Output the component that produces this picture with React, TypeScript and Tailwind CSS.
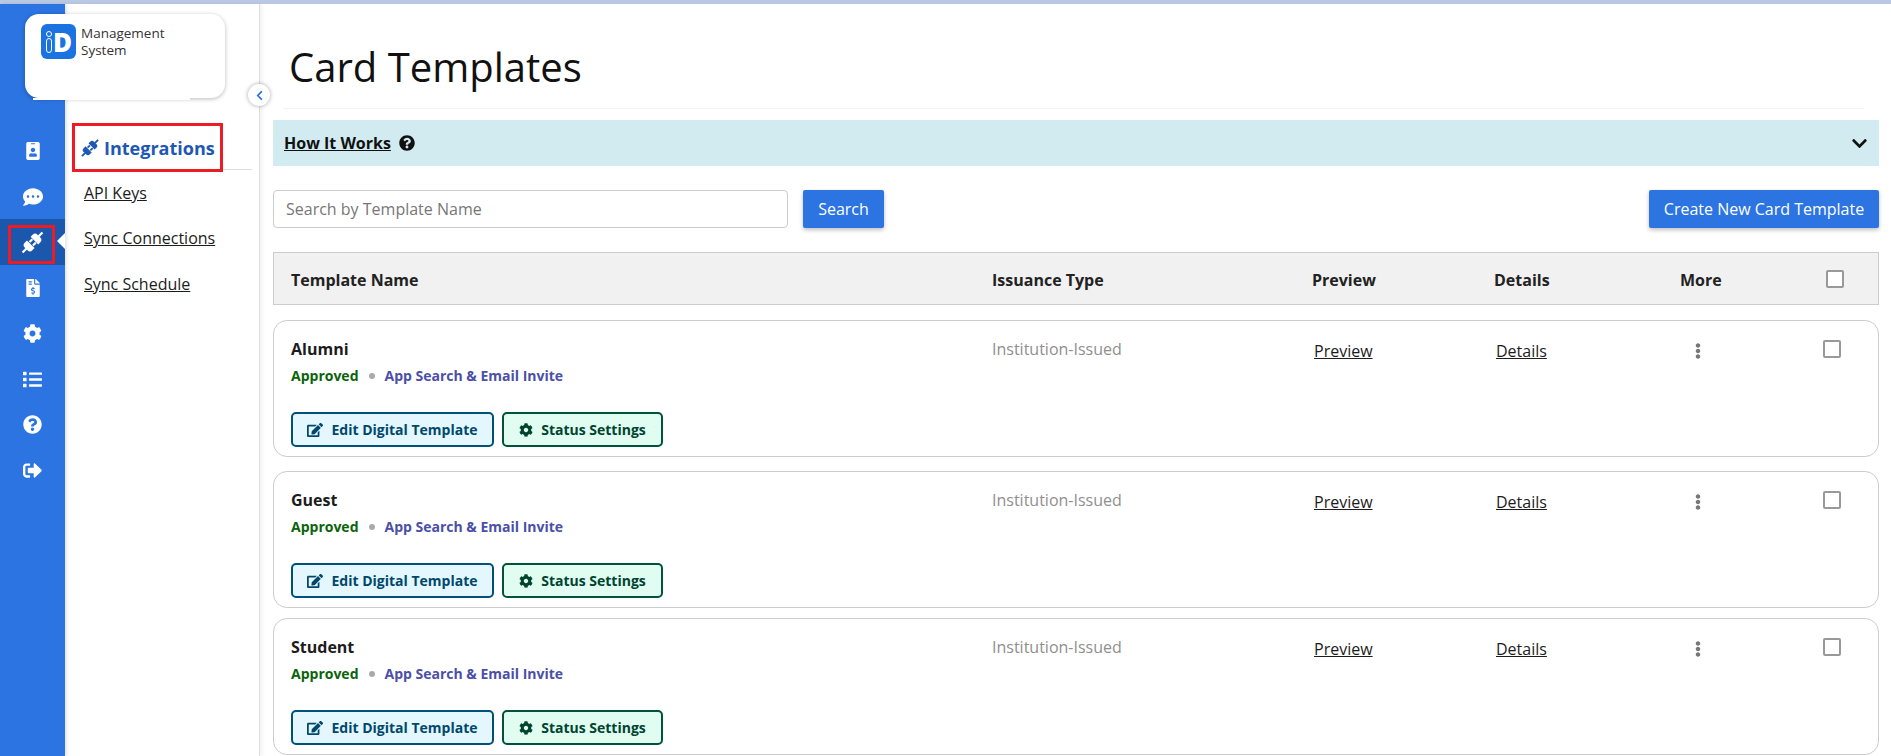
import { ReactNode } from "react";
import {
  FaChevronDown,
  FaChevronLeft,
  FaCog,
  FaCommentDots,
  FaEdit,
  FaEllipsisV,
  FaFileInvoiceDollar,
  FaIdBadge,
  FaList,
  FaQuestionCircle,
  FaSignOutAlt,
} from "react-icons/fa";

// two plugs joined on a diagonal, no package has this one without sparks
const PlugIcon = ({ size }: { size: number }) => (
  <svg width={size} height={size} viewBox="0 0 24 24" fill="currentColor">
    <g transform="rotate(45 12 12)">
      <rect x="11" y="-0.5" width="2" height="5" />
      <path d="M7.2 9.6V7a3 3 0 0 1 3-3h3.6a3 3 0 0 1 3 3v2.6z" />
      <rect x="8.9" y="10" width="1.9" height="3.6" />
      <rect x="13.2" y="10" width="1.9" height="3.6" />
      <path d="M7.2 14.2h9.6V17a3 3 0 0 1-3 3h-3.6a3 3 0 0 1-3-3z" />
      <rect x="11" y="19.5" width="2" height="5" />
    </g>
  </svg>
);

const railItems: { icon: ReactNode; active?: boolean }[] = [
  { icon: <FaIdBadge size={18} /> },
  { icon: <FaCommentDots size={20} /> },
  { icon: <PlugIcon size={27} />, active: true },
  { icon: <FaFileInvoiceDollar size={18} /> },
  { icon: <FaCog size={19} /> },
  { icon: <FaList size={19} /> },
  { icon: <FaQuestionCircle size={19} /> },
  { icon: <FaSignOutAlt size={19} /> },
];

const columns = "grid grid-cols-[701px_320px_182px_186px_146px_1fr] pl-[17px]";

const Checkbox = () => <span className="block w-[18px] h-[18px] rounded-[2px] border-2 border-[#999999] bg-white" />;

const TemplateRow = ({ name, className }: { name: string; className: string }) => (
  <div className={`${columns} h-[137px] rounded-[14px] border border-[#cccccc] pt-[17px] ${className}`}>
    <div>
      <p className="text-[16px] leading-[22px] font-bold text-[#1c1c1c]">{name}</p>
      <div className="mt-[6px] flex items-center text-[14px] leading-[20px] font-bold">
        <span className="text-[#0b630b]">Approved</span>
        <span className="mx-[10px] w-[6px] h-[6px] rounded-full bg-[#aaaaaa]" />
        <span className="text-[#4a4fa8]">App Search &amp; Email Invite</span>
      </div>
      <div className="mt-[26px] flex gap-[8px]">
        <button className="h-[35px] w-[203px] flex items-center justify-center gap-[8px] rounded-[5px] border-2 border-[#00507a] bg-[#e4f6fe] text-[14px] font-bold text-[#00486b]">
          <FaEdit size={16} />
          Edit Digital Template
        </button>
        <button className="h-[35px] w-[161px] flex items-center justify-center gap-[8px] rounded-[5px] border-2 border-[#00533b] bg-[#e1fcf1] text-[14px] font-bold text-[#00442f]">
          <FaCog size={14} />
          Status Settings
        </button>
      </div>
    </div>
    <p className="text-[16px] leading-[22px] text-[#8f8f8f]">Institution-Issued</p>
    <a className="pl-[2px] pt-[1px] text-[16px] leading-[24px] underline text-[#1c1c1c]">Preview</a>
    <a className="pl-[2px] pt-[1px] text-[16px] leading-[24px] underline text-[#1c1c1c]">Details</a>
    <span className="pl-[10px] pt-[5px] text-[#777777]">
      <FaEllipsisV size={16} />
    </span>
    <span className="-ml-[3px] pt-[2px]">
      <Checkbox />
    </span>
  </div>
);

export default function App() {
  return (
    <div className="relative w-[1891px] h-[756px] overflow-hidden bg-white font-['Open_Sans',sans-serif]">
      <div className="h-[4px] bg-[#b9c9e3]" />
      <div className="flex h-[752px]">
        {/* icon rail */}
        <aside className="w-[65px] shrink-0 bg-[#2b74e2] pt-[124px] text-white shadow-[2px_0_3px_rgba(0,0,0,0.1)]">
          {railItems.map((item, i) => (
            <div
              key={i}
              className={`relative h-[45.7px] flex items-center justify-center ${item.active ? "bg-[#1c57ae]" : ""}`}
            >
              {item.icon}
              {item.active && (
                <span className="absolute right-0 top-[14px] border-y-[8px] border-r-[8px] border-y-transparent border-r-white" />
              )}
            </div>
          ))}
        </aside>

        {/* section nav */}
        <nav className="w-[195px] shrink-0 border-r border-[#dddddd] pt-[119px] pl-[7px] pr-[7px] shadow-[2px_0_4px_rgba(0,0,0,0.06)]">
          <div className="h-[47px] flex items-center gap-[3px] pl-[7px] pt-[4px] border-b border-[#dddddd] text-[#1e58b4]">
            <PlugIcon size={22} />
            <span className="text-[18px] font-bold">Integrations</span>
          </div>
          <ul className="pl-[12px] text-[16px] text-[#1c1c1c]">
            <li className="h-[45.5px] flex items-center">
              <a className="underline">API Keys</a>
            </li>
            <li className="h-[45.5px] flex items-center">
              <a className="underline">Sync Connections</a>
            </li>
            <li className="h-[45.5px] flex items-center">
              <a className="underline">Sync Schedule</a>
            </li>
          </ul>
        </nav>

        {/* main content */}
        <main className="flex-1 pl-[13px] pr-[12px]">
          <div className="ml-[10px] mr-[15px] h-[105px] border-b border-[#f3f3f3] pl-[6px] pt-[31px]">
            <h1 className="text-[40px] leading-[64px] text-[#111111]">Card Templates</h1>
          </div>
          <div className="mt-[11px] h-[46px] flex items-center justify-between bg-[#d2ebf0] pl-[11px] pr-[11px]">
            <div className="flex items-center gap-[8px] text-[#111111]">
              <span className="text-[16px] font-bold underline">How It Works</span>
              <FaQuestionCircle size={16} />
            </div>
            <FaChevronDown size={17} className="text-[#111111]" />
          </div>

          <div className="mt-[24px] flex items-center">
            <div className="w-[515px] h-[38px] flex items-center rounded-[4px] border border-[#cccccc] pl-[12px] text-[16px] text-[#777777]">
              Search by Template Name
            </div>
            <button className="ml-[15px] w-[81px] h-[38px] rounded-[2px] bg-[#2b74e2] text-[16px] text-white shadow-[0_2px_4px_rgba(0,0,0,0.25)]">
              Search
            </button>
            <button className="ml-auto w-[230px] h-[38px] rounded-[2px] bg-[#2b74e2] text-[16px] text-white shadow-[0_2px_4px_rgba(0,0,0,0.25)]">
              Create New Card Template
            </button>
          </div>

          <div className={`${columns} mt-[24px] h-[53px] pt-[2px] items-center border border-[#cccccc] bg-[#f1f1f1] text-[16px] font-bold text-[#222222]`}>
            <span>Template Name</span>
            <span>Issuance Type</span>
            <span>Preview</span>
            <span>Details</span>
            <span>More</span>
            <span className="-mt-[1px]">
              <Checkbox />
            </span>
          </div>

          <TemplateRow name="Alumni" className="mt-[15px]" />
          <TemplateRow name="Guest" className="mt-[14px]" />
          <TemplateRow name="Student" className="mt-[10px]" />
        </main>
      </div>

      {/* logo card sits over the rail and the nav */}
      <div className="absolute left-[25px] top-[14px] w-[200px] h-[84px] rounded-[14px] bg-white shadow-[0_1px_4px_rgba(0,0,0,0.28)] pl-[16px] pt-[10px] flex items-start gap-[5px]">
        <span className="w-[35px] h-[35px] shrink-0 flex items-center justify-center gap-[1px] rounded-[6px] bg-[#1a73e0] pl-[1px] text-white">
          <span className="flex flex-col items-center gap-[1px]">
            <span className="w-[6px] h-[6px] rounded-full border border-white" />
            <span className="w-[6px] h-[15px] rounded-full border border-white" />
          </span>
          <span className="text-[26px] leading-none font-extrabold">D</span>
        </span>
        <span className="text-[13.5px] leading-[16.5px] text-[#333333] pt-[1px]">
          Management
          <br />
          System
        </span>
      </div>
      <div className="absolute left-[33px] top-[98px] w-[157px] h-[2px] bg-white" />

      {/* collapse toggle */}
      <button className="absolute left-[248px] top-[84px] w-[22px] h-[22px] flex items-center justify-center rounded-full bg-white text-[#2b74e2] shadow-[0_0_4px_rgba(0,0,0,0.35)]">
        <FaChevronLeft size={11} />
      </button>

      {/* red annotation boxes */}
      <div className="absolute left-[8px] top-[225px] w-[47px] h-[39px] border-[3px] border-[#ed1c24]" />
      <div className="absolute left-[72px] top-[123px] w-[151px] h-[49px] border-[3px] border-[#ed1c24]" />
    </div>
  );
}
